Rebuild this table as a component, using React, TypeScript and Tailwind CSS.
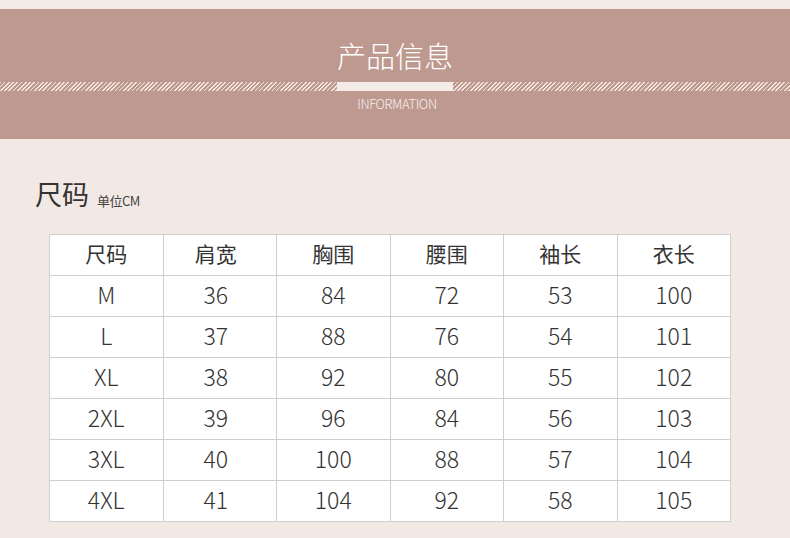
import React from "react";

const headers = ["尺码", "肩宽", "胸围", "腰围", "袖长", "衣长"];
const rows = [
  ["M", "36", "84", "72", "53", "100"],
  ["L", "37", "88", "76", "54", "101"],
  ["XL", "38", "92", "80", "55", "102"],
  ["2XL", "39", "96", "84", "56", "103"],
  ["3XL", "40", "100", "88", "57", "104"],
  ["4XL", "41", "104", "92", "58", "105"],
];

export default function App() {
  return (
    <div
      className="w-[790px] h-[538px] overflow-hidden bg-[#f3e9e4] text-[#333]"
      style={{ fontFamily: '"Noto Sans CJK SC", "Noto Sans", sans-serif' }}
    >
      <div className="h-[9px] bg-[#f3ebe6]" />
      <div className="h-[130px] bg-[#be998f] flex flex-col">
        <div className="h-[73px] flex items-start justify-center pt-[29px]">
          <div
            className="text-[29px] leading-[34px] text-white tracking-[0px]"
            style={{ fontFamily: '"Noto Sans CJK SC", serif', fontWeight: 300 }}
          >
            产品信息
          </div>
        </div>
        <div className="h-[9px] flex">
          <div className="flex-1 bg-[repeating-linear-gradient(135deg,#f3e4de_0px,#f3e4de_1.2px,transparent_1.2px,transparent_3px)]" />
          <div className="w-[116px] bg-[#f3ebe6]" />
          <div className="flex-1 bg-[repeating-linear-gradient(135deg,#f3e4de_0px,#f3e4de_1.2px,transparent_1.2px,transparent_3px)]" />
        </div>
        <div className="flex justify-center pt-[4px] pl-[4px]">
          <div className="text-[13px] leading-[18px] font-light text-[#f7efec] tracking-[-0.4px]">
            INFORMATION
          </div>
        </div>
      </div>
      <div className="pl-[35px] pt-[37px] flex items-end gap-[8px]">
        <div className="text-[27px] leading-[36px] text-[#333]">尺码</div>
        <div className="text-[13px] leading-[20px] mb-[1px] text-[#444] tracking-[-0.5px]">单位CM</div>
      </div>
      <div className="ml-[49px] mt-[22px] w-[682px] bg-white border-l border-t border-[#cfcfcf]">
        <div className="grid grid-cols-6">
          {headers.map((h, j) => (
            <div
              key={h}
              className={
                "h-[41px] pb-[3px] border-r border-b border-[#cfcfcf] flex items-center justify-center text-[21px] text-[#333] " +
                (j === 1 ? "pr-[8px]" : "")
              }
            >
              {h}
            </div>
          ))}
          {rows.map((r, i) =>
            r.map((c, j) => (
              <div
                key={i + "-" + j}
                className={
                  "h-[41px] pb-[3px] border-r border-b border-[#cfcfcf] flex items-center justify-center text-[23px] text-[#333] " +
                  (j === 1 ? "pr-[8px]" : "")
                }
                style={{ fontWeight: 300 }}
              >
                {c}
              </div>
            ))
          )}
        </div>
      </div>
    </div>
  );
}
